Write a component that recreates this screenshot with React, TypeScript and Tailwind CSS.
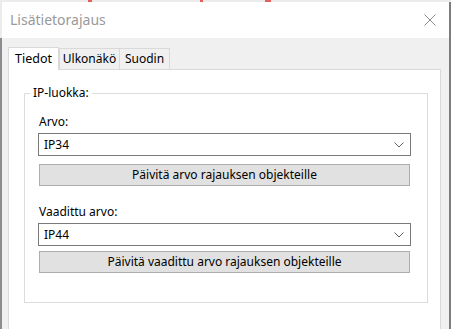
const font = { fontFamily: '"Noto Sans", "Open Sans", sans-serif' }

function Combo({ value }: { value: string }) {
  return (
    <div className="w-[373px] h-[23px] border border-[#7a7a7a] bg-white flex items-center justify-between pl-[5px] pr-[5px]">
      <span className="text-[12px] text-black leading-none">{value}</span>
      <svg width="10" height="6" viewBox="0 0 10 6" className="mr-[1px]">
        <path d="M0.5 0.5 L5 5 L9.5 0.5" fill="none" stroke="#606060" strokeWidth="1" />
      </svg>
    </div>
  )
}

function Btn({ label }: { label: string }) {
  return (
    <button className="ml-px w-[371px] h-[22px] border border-[#adadad] bg-[#e1e1e1] text-[12px] text-black leading-none flex items-center justify-center">
      {label}
    </button>
  )
}

export default function App() {
  return (
    <div className="w-[451px] h-[329px] overflow-hidden bg-[#eeeeee] flex flex-col" style={font}>
      {/* background strip behind dialog */}
      <div className="h-[2px] flex bg-[#ececec]">
        <div className="ml-[88px] w-[4px] bg-[#e06060]" />
        <div className="ml-[108px] w-[3px] bg-[#e06060]" />
        <div className="ml-[62px] w-[6px] bg-[#e06060]" />
      </div>
      <div className="flex flex-1 min-h-0">
        <div className="w-[2px] flex flex-col">
          <div className="h-[36px] bg-[#ececec]" />
          <div className="flex-1 bg-[#8c8c8c]" />
        </div>

        <div className="flex-1 flex flex-col min-w-0">
          {/* title bar */}
          <div className="h-[36px] bg-white flex items-center justify-between pl-[8px] pr-[13px]">
            <span className="text-[14px] text-[#999999] leading-none">Lisätietorajaus</span>
            <svg width="12" height="12" viewBox="0 0 12 12">
              <path d="M0.5 0.5 L11.5 11.5 M11.5 0.5 L0.5 11.5" stroke="#8a8a8a" strokeWidth="1" />
            </svg>
          </div>

          {/* body */}
          <div className="flex-1 bg-[#f0f0f0] pl-[6px] pt-[9px] flex flex-col">
            <div className="flex items-end h-[22px]">
              <div className="w-[51px] h-[23px] -mb-px relative z-10 bg-white border border-b-0 border-[#d9d9d9] flex items-center justify-center text-[12.5px] text-black">
                Tiedot
              </div>
              <div className="w-[61px] h-[21px] bg-[#f0f0f0] border border-b-0 border-[#d9d9d9] flex items-center justify-center text-[12px] text-black">
                Ulkonäkö
              </div>
              <div className="w-[50px] h-[21px] bg-[#f0f0f0] border border-b-0 border-l-0 border-[#d9d9d9] flex items-center justify-center text-[12px] text-black">
                Suodin
              </div>
            </div>

            <div className="w-[433px] flex-1 bg-white border border-b-0 border-[#d9d9d9] pl-[15px] pt-[15px]">
              <fieldset className="w-[404px] border border-[#dcdcdc] pb-[29px]">
                <legend className="ml-[5px] px-[3px] text-[12px] text-black leading-[16px]">IP-luokka:</legend>
                <div className="pl-[13px] pt-[13px] flex flex-col">
                  <span className="pl-px text-[12px] text-black leading-[16px] mb-[3px]">Arvo:</span>
                  <Combo value="IP34" />
                  <div className="h-[8px]" />
                  <Btn label="Päivitä arvo rajauksen objekteille" />
                  <span className="pl-px mt-[18px] text-[12px] text-black leading-[16px] mb-[3px]">Vaadittu arvo:</span>
                  <Combo value="IP44" />
                  <div className="h-[5px]" />
                  <Btn label="Päivitä vaadittu arvo rajauksen objekteille" />
                </div>
              </fieldset>
            </div>
          </div>
        </div>

        <div className="w-[2px] bg-[#7d7d7d]" />
      </div>
    </div>
  )
}
